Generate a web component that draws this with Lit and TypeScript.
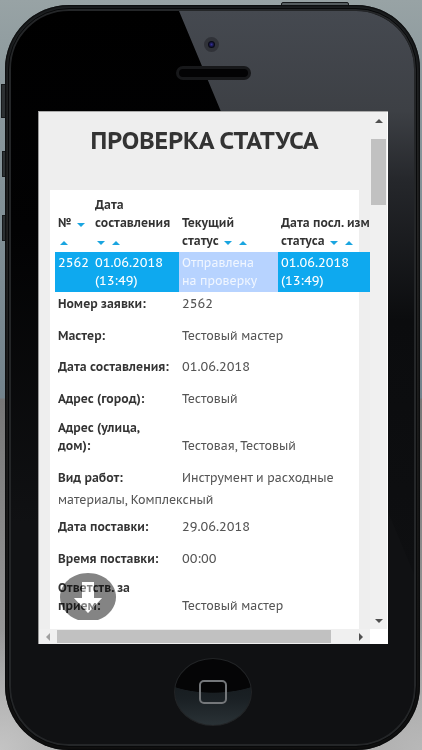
import { LitElement, html, css, svg } from "lit";
import { customElement, property } from "lit/decorators.js";

interface Detail {
  label: string;
  value: string;
  numeric?: boolean;
  long?: boolean;
}

const DETAILS: Detail[] = [
  { label: "Номер заявки:", value: "2562", numeric: true },
  { label: "Мастер:", value: "Тестовый мастер" },
  { label: "Дата составления:", value: "01.06.2018", numeric: true },
  { label: "Адрес (город):", value: "Тестовый" },
  { label: "Адрес (улица, дом):", value: "Тестовая, Тестовый" },
  { label: "Вид работ:", value: "Инструмент и расходные материалы, Комплексный", long: true },
  { label: "Дата поставки:", value: "29.06.2018", numeric: true },
  { label: "Время поставки:", value: "00:00", numeric: true },
  { label: "Ответств. за прием:", value: "Тестовый мастер" },
];

const triangle = (dir: string) => {
  const points: Record<string, string> = {
    up: "0,4 4,0 8,4",
    down: "0,0 8,0 4,4",
    left: "4,0 4,8 0,4",
    right: "0,0 0,8 4,4",
  };
  const wide = dir === "up" || dir === "down";
  return html`<svg width=${wide ? 8 : 4} height=${wide ? 4 : 8} aria-hidden="true">
    ${svg`<polygon points=${points[dir]} fill="currentColor"/>`}
  </svg>`;
};

/** Order list: sortable table with the opened order's details below it. */
@customElement("status-page")
export class StatusPage extends LitElement {
  static styles = css`
    :host {
      display: block;
      position: relative;
      min-width: 0;
      overflow: hidden;
      background: #eee;
      color: #555;
      font: 12px/18px "PT Sans Caption", "Noto Sans", sans-serif;
    }
    h1 {
      margin: 0;
      padding: 11px 0 31px;
      text-align: center;
      font-size: 24px;
      line-height: 36px;
      color: #333;
    }
    .panel {
      margin: 0 11px;
      padding: 4px 5px 3px;
      background: #fff;
    }
    table {
      table-layout: fixed;
      width: 380px;
      border-collapse: collapse;
    }
    .c-num { width: 37px; }
    .c-date { width: 87px; }
    .c-status { width: 99px; }
    th, td {
      padding: 2px 0 2px 3px;
      text-align: left;
    }
    th { color: #333; vertical-align: bottom; }
    td { background: #0ea9ef; color: #fff; vertical-align: top; }
    .numeric { font-size: 13px; }
    td.current { background: #b7d3ff; color: #f0f6ff; }
    .nowrap { white-space: nowrap; }
    .sort {
      display: inline-flex;
      align-items: center;
      justify-content: center;
      width: 12px;
      height: 10px;
      margin: 0;
      padding: 0;
      border: 0;
      background: none;
      color: #1aa5e0;
    }
    dl { margin: 0; padding: 1px 3px 0; }
    .row { padding-bottom: 9px; line-height: 22px; }
    .row:nth-child(odd) { padding-bottom: 10px; }
    .row.long { padding-bottom: 5px; }
    .row:last-child { padding-bottom: 9px; }
    dt {
      display: inline-block;
      box-sizing: border-box;
      width: 124px;
      padding-right: 10px;
      line-height: 18px;
      font-weight: bold;
      color: #333;
    }
    dd { display: inline; margin: 0; }
    .jump {
      position: absolute;
      left: 21px;
      bottom: 9px;
      padding: 0;
      border: 0;
      background: none;
      line-height: 0;
      mix-blend-mode: multiply;
    }
    .jump-arrow {
      position: absolute;
      left: 21px;
      bottom: 9px;
      pointer-events: none;
    }
  `;

  private sort(label: string, dir: string) {
    return html`<button class="sort" aria-label=${`${label} ${dir === "up" ? "▲" : "▼"}`}>${triangle(dir)}</button>`;
  }

  render() {
    return html`
      <h1>ПРОВЕРКА СТАТУСА</h1>
      <div class="panel">
        <table>
          <colgroup><col class="c-num" /><col class="c-date" /><col class="c-status" /><col /></colgroup>
          <thead>
            <tr>
              <th>№ ${this.sort("№", "down")} ${this.sort("№", "up")}</th>
              <th>Дата<br />составления<br />${this.sort("Дата", "down")} ${this.sort("Дата", "up")}</th>
              <th>Текущий<br />статус ${this.sort("Статус", "down")} ${this.sort("Статус", "up")}</th>
              <th class="nowrap">Дата посл. изм.<br />статуса ${this.sort("Изменение", "down")} ${this.sort("Изменение", "up")}</th>
            </tr>
          </thead>
          <tbody>
            <tr>
              <td class="numeric">2562</td>
              <td class="numeric">01.06.2018<br />(13:49)</td>
              <td class="current">Отправлена<br />на проверку</td>
              <td class="numeric">01.06.2018<br />(13:49)</td>
            </tr>
          </tbody>
        </table>
        <dl>
          ${DETAILS.map(
            (d) => html`<div class="row ${d.long ? "long" : ""}"><dt>${d.label}</dt><dd class=${d.numeric ? "numeric" : ""}>${d.value}</dd></div>`
          )}
        </dl>
      </div>
      <button class="jump" aria-label="Вниз">
        <svg width="56" height="47" viewBox="0 0 56 47">
          <path d="M18 47C7 43 0 34 0 24C0 11 12 0 28 0S56 11 56 24C56 34 49 43 38 47Z" fill="#848484" />
          <path d="M22 9H34V25H42L28 40L14 25H22Z" fill="#fff" />
        </svg>
      </button>
      <svg class="jump-arrow" width="56" height="47" viewBox="0 0 56 47" aria-hidden="true">
        <path d="M22 9H34V25H42L28 40L14 25H22Z" fill="#fff" fill-opacity="0.4" />
      </svg>
    `;
  }
}

@customElement("scroll-track")
export class ScrollTrack extends LitElement {
  @property({ reflect: true }) dir = "vertical";

  static styles = css`
    :host { display: flex; background: #f0f0f0; color: #505050; }
    :host([dir="vertical"]) { flex-direction: column; }
    button {
      display: flex;
      flex: none;
      align-items: center;
      justify-content: center;
      width: 17px;
      height: 17px;
      padding: 0;
      border: 0;
      background: none;
      color: inherit;
    }
    .off { color: #a0a0a0; }
    :host([dir="horizontal"]) button { width: 18px; height: 15px; }
    .track { display: flex; flex: 1; }
    :host([dir="vertical"]) .track { flex-direction: column; padding-top: 10px; }
    .thumb { background: #c1c1c1; }
    :host([dir="vertical"]) .thumb { height: 14%; width: 15px; margin-left: 1px; }
    :host([dir="horizontal"]) .thumb { width: 93%; height: 13px; margin-top: 1px; }
  `;

  render() {
    const vertical = this.dir === "vertical";
    return html`
      <button class=${vertical ? "" : "off"} aria-label="Назад">${triangle(vertical ? "up" : "left")}</button>
      <div class="track"><div class="thumb"></div></div>
      <button aria-label="Вперёд">${triangle(vertical ? "down" : "right")}</button>
    `;
  }
}

@customElement("app-root")
export class AppRoot extends LitElement {
  static styles = css`
    :host {
      display: flex;
      box-sizing: border-box;
      position: relative;
      min-height: 100vh;
      padding: 5px 2px 0 5px;
      background:
        radial-gradient(circle at 0 100%, #c4c4c4, transparent 120px),
        radial-gradient(circle at 100% 100%, #b8b8b8, transparent 120px),
        linear-gradient(#98a3a5 0, #8c999d 80px, #73838c 398px, #777 399px, #a6a6a6 100%);
    }
    .key {
      position: absolute;
      box-sizing: border-box;
      background: #2c3032;
      border: 1px solid #15181a;
    }
    .power { top: 2px; right: 73px; width: 68px; height: 5px; border-radius: 2px 2px 0 0; background: #555c5f; }
    .mute { left: 1px; top: 84px; width: 6px; height: 34px; }
    .louder { left: 2px; top: 151px; width: 5px; height: 26px; }
    .quieter { left: 2px; top: 215px; width: 5px; height: 26px; }
    .phone {
      position: relative;
      display: flex;
      flex: 1;
      min-width: 0;
      padding: 4px;
      border-radius: 64px;
      background: linear-gradient(#1c1f21, #242424 30%, #111);
      box-shadow: inset 0 0 2px 1px #08090a;
    }
    .face {
      position: relative;
      display: flex;
      flex: 1;
      flex-direction: column;
      min-width: 0;
      box-sizing: border-box;
      padding: 0 26px 0 27px;
      border: 2px solid #242628;
      outline: 1px solid #08090a;
      border-radius: 60px;
      background: linear-gradient(#000, #020203 30%, #101113 70%);
      overflow: hidden;
    }
    .gloss {
      position: absolute;
      inset: 0;
      background: linear-gradient(#454950, #3d4045 100px, #25272b 170px, #0b0c0e 310px, #0d0e10 480px, #101113);
      clip-path: polygon(168px 0, 100% 0, 100% 100%, 460px 700px);
    }
    .top, .bottom {
      position: relative;
      display: flex;
      flex: none;
      flex-direction: column;
      align-items: center;
    }
    .top { height: 100px; gap: 14px; padding-top: 26px; box-sizing: border-box; }
    .camera {
      width: 7px;
      height: 7px;
      border: 4px solid #303238;
      border-radius: 50%;
      background: radial-gradient(circle, #35309a, #090a18 60%);
      margin-right: 4px;
    }
    .speaker {
      box-sizing: border-box;
      width: 75px;
      height: 14px;
      border: 3px solid #17181a;
      border-radius: 7px;
      background: #030304;
    }
    .screen {
      position: relative;
      display: grid;
      flex: 1;
      grid-template-columns: 1fr 18px;
      grid-template-rows: 1fr 15px;
      box-sizing: border-box;
      border-top: 1px solid #aaa;
      border-left: 1px solid #999;
      background: #fff;
    }
    .vbar { margin-right: 1px; }
    .bottom { height: 100px; padding-top: 14px; box-sizing: border-box; }
    .home {
      display: flex;
      align-items: center;
      justify-content: center;
      width: 78px;
      height: 68px;
      padding: 0;
      border: 1px solid #222426;
      border-radius: 50%;
      background: radial-gradient(ellipse 70px 34px at 50% 0, #050506 98%, transparent), linear-gradient(#111518, #1a2024 60%, #2a3236);
    }
    .square {
      box-sizing: border-box;
      width: 28px;
      height: 24px;
      border: 2px solid #74777a;
      border-radius: 5px;
    }
  `;

  render() {
    return html`
      <span class="key power"></span>
      <span class="key mute"></span>
      <span class="key louder"></span>
      <span class="key quieter"></span>
      <div class="phone">
        <div class="face">
          <div class="gloss"></div>
          <div class="top">
            <span class="camera"></span>
            <span class="speaker"></span>
          </div>
          <main class="screen">
            <status-page></status-page>
            <scroll-track class="vbar" dir="vertical"></scroll-track>
            <scroll-track dir="horizontal"></scroll-track>
          </main>
          <div class="bottom">
            <button class="home" aria-label="Домой"><span class="square"></span></button>
          </div>
        </div>
      </div>
    `;
  }
}
